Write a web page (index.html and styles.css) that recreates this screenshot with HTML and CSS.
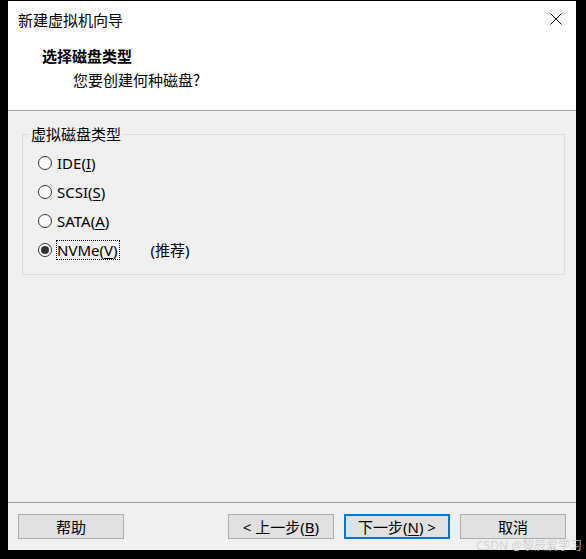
FILE: index.html
```html
<!DOCTYPE html>
<html lang="zh-CN">
<head>
<meta charset="utf-8">
<title>新建虚拟机向导</title>
<link rel="stylesheet" href="styles.css">
</head>
<body>
<div class="window">
  <div class="titlebar">
    <span class="title">新建虚拟机向导</span>
    <svg class="close" width="12" height="12" viewBox="0 0 12 12"><path d="M0.5 0.5 L11.5 11.5 M11.5 0.5 L0.5 11.5" stroke="#000" stroke-width="1" fill="none"/></svg>
  </div>
  <div class="header">
    <div class="h-title">选择磁盘类型</div>
    <div class="h-sub">您要创建何种磁盘?</div>
  </div>
  <div class="content">
    <fieldset class="group">
      <legend>虚拟磁盘类型</legend>
      <div class="row"><span class="radio"></span><span class="label">IDE(<u>I</u>)</span></div>
      <div class="row"><span class="radio"></span><span class="label">SCSI(<u>S</u>)</span></div>
      <div class="row"><span class="radio"></span><span class="label">SATA(<u>A</u>)</span></div>
      <div class="row"><span class="radio checked"></span><span class="label focus">NVMe(<u>V</u>)</span><span class="rec">(推荐)</span></div>
    </fieldset>
  </div>
  <div class="footer">
    <button class="btn">帮助</button>
    <span class="spacer"></span>
    <button class="btn">&lt; 上一步(<u>B</u>)</button>
    <button class="btn default">下一步(<u>N</u>) &gt;</button>
    <button class="btn">取消</button>
  </div>
</div>
<div class="watermark">CSDN @黎辰爱学习</div>
</body>
</html>
```

FILE: styles.css
```css
html, body {
  margin: 0;
  padding: 0;
  background: #000;
}
body {
  padding: 1px 10px 9px 8px;
  width: 568px;
  height: 549px;
  position: relative;
  font-family: "Noto Sans", "Noto Sans CJK SC", sans-serif;
  font-size: 15px;
  color: #000;
}
.window {
  width: 568px;
  height: 549px;
  background: #f0f0f0;
  display: flex;
  flex-direction: column;
}
.titlebar {
  height: 37px;
  background: #fff;
  display: flex;
  align-items: center;
  padding: 0 14px 0 10px;
  box-sizing: border-box;
  flex: none;
}
.title {
  flex: 1;
  font-family: "Noto Sans CJK SC", sans-serif;
  font-size: 15px;
  line-height: 20px;
}
.close {
  display: block;
  margin-top: -1px;
}
.header {
  background: #fff;
  border-bottom: 1px solid #a0a0a0;
  padding-top: 8px;
  box-sizing: border-box;
  height: 73px;
  flex: none;
}
.h-title {
  font-family: "Noto Sans CJK SC", sans-serif;
  font-weight: bold;
  font-size: 15px;
  line-height: 20px;
  padding-left: 34px;
}
.h-sub {
  font-family: "Noto Sans CJK SC", sans-serif;
  font-size: 15px;
  line-height: 20px;
  padding-left: 65px;
  margin-top: 4px;
}
.content {
  padding: 13px 11px 0 14px;
  box-sizing: border-box;
  border-bottom: 1px solid #a0a0a0;
  height: 392px;
  flex: none;
}
.group {
  margin: 0;
  border: 1px solid #dcdcdc;
  padding: 4px 14px 10px 15px;
}
.group legend {
  padding: 0 2px;
  margin-left: -9px;
  line-height: 20px;
  font-family: "Noto Sans CJK SC", sans-serif;
}
.row {
  height: 29px;
  display: flex;
  align-items: center;
}
.radio {
  flex: none;
  width: 14px;
  height: 14px;
  box-sizing: border-box;
  border: 1px solid #333;
  border-radius: 50%;
  background: #fff;
  margin-right: 5px;
  display: flex;
  align-items: center;
  justify-content: center;
}
.radio.checked::after {
  content: "";
  width: 8px;
  height: 8px;
  border-radius: 50%;
  background: #333;
}
.label {
  line-height: 18px;
  padding: 0 1px 0 0;
}
.label u, .btn u {
  text-underline-offset: 2px;
}
.focus {
  outline: 1px dotted #000;
  outline-offset: 0;
}
.rec {
  margin-left: 32px;
}
.footer {
  flex: 1;
  display: flex;
  align-items: flex-start;
  gap: 10px;
  padding: 11px 10px 0 10px;
}
.spacer {
  flex: 1;
}
.btn {
  width: 106px;
  height: 25px;
  background: #e1e1e1;
  border: 1px solid #adadad;
  font-family: "Noto Sans", "Noto Sans CJK SC", sans-serif;
  font-size: 15px;
  color: #000;
  padding: 0;
  line-height: 20px;
}
.btn.default {
  border: 2px solid #0078d7;
}
.watermark {
  position: absolute;
  right: 4px;
  bottom: 6px;
  font-family: "Noto Sans", "Noto Sans CJK SC", sans-serif;
  font-size: 12px;
  color: rgba(205, 205, 205, 0.85);
  line-height: 14px;
}
```
